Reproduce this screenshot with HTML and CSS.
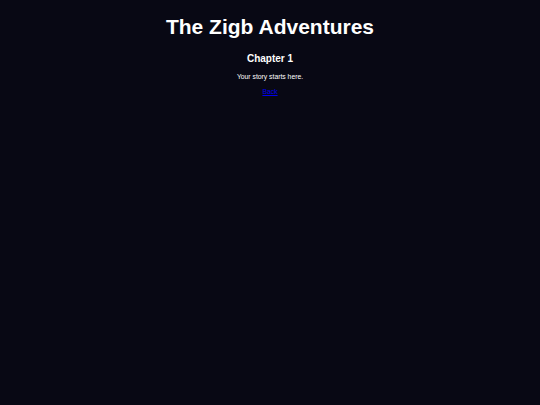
FILE: index.html
```html
<!DOCTYPE html>
<html>
<head>
<meta charset="utf-8">
<title>The Zigb Adventures</title>
<link rel="stylesheet" href="styles.css">
</head>
<body>
<main class="page">
  <h1 class="title">The Zigb Adventures</h1>
  <h2 class="chapter">Chapter 1</h2>
  <p class="story">Your story starts here.</p>
  <a class="back" href="#">Back</a>
</main>
</body>
</html>
```
FILE: styles.css
```css
html, body {
  margin: 0;
  padding: 0;
  height: 100%;
}
body {
  background: #080814;
  color: #ffffff;
  font-family: "Liberation Sans", Arial, sans-serif;
}
.page {
  display: flex;
  flex-direction: column;
  align-items: center;
  padding-top: 14px;
}
.title {
  margin: 0;
  font-size: 21px;
  line-height: 26px;
  font-weight: bold;
}
.chapter {
  margin: 12px 0 0;
  font-size: 10px;
  line-height: 13px;
  font-weight: bold;
}
.story {
  margin: 7px 0 0;
  font-size: 6.8px;
  line-height: 9px;
}
.back {
  margin-top: 6px;
  font-size: 6.8px;
  line-height: 9px;
  color: #0000ee;
}
```
